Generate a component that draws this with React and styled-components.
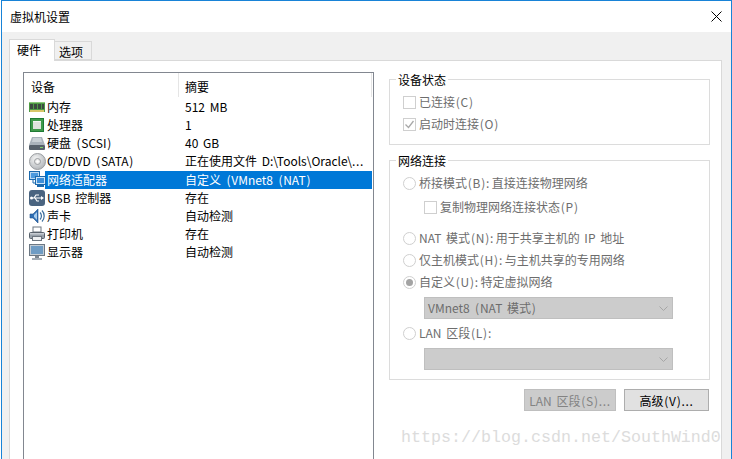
import * as React from 'react'
import styled, { createGlobalStyle } from 'styled-components'

const GlobalStyle = createGlobalStyle`
  html, body {
    margin: 0;
    padding: 0;
    height: 459px;
    overflow: hidden;
    background: #fff;
  }

  body {
    font-family: "Noto Sans CJK SC", "Noto Sans", sans-serif;
    font-size: 12px;
    word-spacing: 2px;
    color: #000;
  }
`

const RamIcon = () => (
  <svg width="16" height="16" viewBox="0 0 16 16">
    <rect x="0" y="3" width="16" height="10" fill="#4f9a45" />
    <rect x="0" y="3" width="16" height="1" fill="#8cc97c" />
    <rect x="1" y="5" width="3" height="5" fill="#3b4a40" />
    <rect x="5" y="5" width="3" height="5" fill="#3b4a40" />
    <rect x="9" y="5" width="3" height="5" fill="#3b4a40" />
    <rect x="13" y="5" width="2" height="5" fill="#3b4a40" />
    <rect x="1" y="11" width="14" height="2" fill="#d8c66a" />
  </svg>
)

const CpuIcon = () => (
  <svg width="16" height="16" viewBox="0 0 16 16">
    <rect x="1" y="1" width="14" height="14" fill="#3f9a4a" />
    <rect x="1.5" y="1.5" width="13" height="13" fill="none" stroke="#1f7a35" />
    <rect x="4" y="4" width="8" height="8" fill="#dfe4dd" />
    <rect x="4" y="4" width="8" height="1" fill="#f4f6f3" />
  </svg>
)

const DiskIcon = () => (
  <svg width="16" height="16" viewBox="0 0 16 16">
    <path d="M3 2h10l3 8H0z" fill="#a9b2bb" />
    <path d="M4 3h8l1 4H3z" fill="#c9d0d6" />
    <rect x="0" y="10" width="16" height="5" rx="1" fill="#56606b" />
    <rect x="11" y="12" width="3" height="1" fill="#7fd06a" />
  </svg>
)

const DiscIcon = () => (
  <svg width="17" height="17" viewBox="0 0 17 17">
    <defs>
      <radialGradient id="disc" cx="0.4" cy="0.35" r="0.8">
        <stop offset="0" stopColor="#f6f6f6" />
        <stop offset="0.6" stopColor="#c6c9cc" />
        <stop offset="1" stopColor="#a6a9ad" />
      </radialGradient>
    </defs>
    <circle cx="8.5" cy="8.5" r="8" fill="url(#disc)" stroke="#9a9da1" />
    <circle cx="8.5" cy="8.5" r="3" fill="#e8e8e8" stroke="#9a9da1" />
    <circle cx="8.5" cy="8.5" r="1.2" fill="#fff" />
  </svg>
)

const NetworkIcon = () => (
  <svg width="17" height="17" viewBox="0 0 17 17">
    <rect x="0.5" y="0.5" width="10" height="8" fill="#bcd9f2" stroke="#1b69ad" />
    <rect x="2" y="2" width="7" height="5" fill="#4d9ade" />
    <path d="M4 9v3h2" fill="none" stroke="#1b69ad" />
    <rect x="6.5" y="5.5" width="10" height="8" fill="#cfe6f8" stroke="#1b69ad" />
    <rect x="8" y="7" width="7" height="5" fill="#3f8fd8" />
    <rect x="8" y="14" width="7" height="2" fill="#1b69ad" />
  </svg>
)

const UsbIcon = () => (
  <svg width="16" height="16" viewBox="0 0 16 16">
    <rect x="0" y="0" width="16" height="16" rx="3" fill="#4a6480" />
    <path d="M2 8h11M5 8l2-3h3M6 8l2 3h2" fill="none" stroke="#fff" strokeWidth="1.2" />
    <path d="M12 6l3 2-3 2z" fill="#fff" />
    <circle cx="2.5" cy="8" r="1.5" fill="#fff" />
  </svg>
)

const SoundIcon = () => (
  <svg width="16" height="16" viewBox="0 0 16 16">
    <path d="M1 6h3l5-5v14l-5-5H1z" fill="#2f6fb5" stroke="#1e4f8a" strokeWidth="0.6" />
    <path d="M5 7l3-3v8l-3-3z" fill="#a9cdee" />
    <path d="M11 4.5a5 5 0 0 1 0 7M13 2.5a8 8 0 0 1 0 11" fill="none" stroke="#3c6f9f" strokeWidth="1.2" />
  </svg>
)

const PrinterIcon = () => (
  <svg width="16" height="16" viewBox="0 0 16 16">
    <rect x="4" y="1" width="8" height="5" fill="#fff" stroke="#6d7680" />
    <rect x="0.5" y="6.5" width="15" height="6" rx="1" fill="#98a1aa" stroke="#59626c" />
    <rect x="1" y="7" width="14" height="1.5" fill="#c6ccd2" />
    <rect x="3.5" y="10.5" width="9" height="4" fill="#eef0f2" stroke="#6d7680" />
  </svg>
)

const MonitorIcon = () => (
  <svg width="16" height="16" viewBox="0 0 16 16">
    <rect x="0.5" y="0.5" width="15" height="11" fill="#c3ccd4" stroke="#6c7884" />
    <rect x="2" y="2" width="12" height="8" fill="#6f9cc4" />
    <rect x="6" y="12" width="4" height="2" fill="#7c8690" />
    <rect x="3" y="14" width="10" height="2" fill="#a3acb5" />
  </svg>
)

const TickIcon = () => (
  <svg width="11" height="11" viewBox="0 0 11 11">
    <path d="M1.5 5.5l3 3 5-6.5" fill="none" stroke="#a8a8a8" strokeWidth="1.3" />
  </svg>
)

const CloseIcon = () => (
  <svg width="11" height="11" viewBox="0 0 11 11">
    <path d="M0.5 0.5l10 10M10.5 0.5l-10 10" fill="none" stroke="#000" />
  </svg>
)

const ChevronIcon = () => (
  <svg width="9" height="5" viewBox="0 0 9 5">
    <path d="M0.5 0.5l4 4 4-4" fill="none" stroke="#a6a6a6" />
  </svg>
)

const DEVICES = [
  { icon: <RamIcon />, name: '内存', summary: '512 MB' },
  { icon: <CpuIcon />, name: '处理器', summary: '1' },
  { icon: <DiskIcon />, name: '硬盘 (SCSI)', summary: '40 GB' },
  { icon: <DiscIcon />, name: 'CD/DVD (SATA)', summary: '正在使用文件 D:\\Tools\\Oracle\\...' },
  { icon: <NetworkIcon />, name: '网络适配器', summary: '自定义 (VMnet8 (NAT)', selected: true },
  { icon: <UsbIcon />, name: 'USB 控制器', summary: '存在' },
  { icon: <SoundIcon />, name: '声卡', summary: '自动检测' },
  { icon: <PrinterIcon />, name: '打印机', summary: '存在' },
  { icon: <MonitorIcon />, name: '显示器', summary: '自动检测' }
]

// the original UI font sets brackets and dots wider than Noto does
function Txt({ children }) {
  return children.split(/([()]|\.\.\.)/).map((part, i) => {
    if (part === '(' || part === ')') return <Bracket key={i}>{part}</Bracket>
    if (part === '...') return <Dots key={i}>{part}</Dots>
    return part
  })
}

function Choice({ kind = 'check', checked, indent, gap, children }) {
  return (
    <ChoiceRow $indent={indent} $gap={gap}>
      {kind === 'check' ? (
        <CheckBox>{checked && <TickIcon />}</CheckBox>
      ) : (
        <RadioDot>{checked && <RadioFill />}</RadioDot>
      )}
      <ChoiceLabel><Txt>{children}</Txt></ChoiceLabel>
    </ChoiceRow>
  )
}

export default function App() {
  return (
    <>
      <GlobalStyle />
      <Window>
        <TitleBar>
          虚拟机设置
          <CloseButton><CloseIcon /></CloseButton>
        </TitleBar>
        <Body>
          <Tabs>
            <Tab $active>硬件</Tab>
            <Tab>选项</Tab>
          </Tabs>
          <Page>
            <DeviceList>
              <ListHeader>
                <HeaderCell $width={155}>设备</HeaderCell>
                <HeaderCell $width={193}>摘要</HeaderCell>
              </ListHeader>
              {DEVICES.map((d) => (
                <DeviceRow key={d.name}>
                  <IconSlot>{d.icon}</IconSlot>
                  <NameCell $selected={d.selected}><Txt>{d.name}</Txt></NameCell>
                  <SummaryCell $selected={d.selected}><Txt>{d.summary}</Txt></SummaryCell>
                </DeviceRow>
              ))}
            </DeviceList>
            <Side>
              <Group>
                <Legend>设备状态</Legend>
                <Choice>已连接(C)</Choice>
                <Choice checked>启动时连接(O)</Choice>
              </Group>
              <Group $second>
                <Legend>网络连接</Legend>
                <Choice kind="radio">{'桥接模式(B):\u2009直接连接物理网络'}</Choice>
                <Choice indent={21} gap={2}>复制物理网络连接状态(P)</Choice>
                <Choice kind="radio" gap={9}>{'NAT 模式(N):\u2009用于共享主机的 IP 地址'}</Choice>
                <Choice kind="radio">{'仅主机模式(H):\u2009与主机共享的专用网络'}</Choice>
                <Choice kind="radio" checked>{'自定义(U):\u2009特定虚拟网络'}</Choice>
                <Select>
                  <SelectText><Txt>VMnet8 (NAT 模式)</Txt></SelectText>
                  <ChevronIcon />
                </Select>
                <Choice kind="radio" gap={3}>LAN 区段(L):</Choice>
                <Select>
                  <SelectText />
                  <ChevronIcon />
                </Select>
              </Group>
              <Buttons>
                <Button $disabled><Txt>LAN 区段(S)...</Txt></Button>
                <Button $wide><Txt>高级(V)...</Txt></Button>
              </Buttons>
            </Side>
          </Page>
        </Body>
        <Watermark>https://blog.csdn.net/SouthWind0</Watermark>
      </Window>
    </>
  )
}

const Bracket = styled.span`
  padding: 0 0.75px;
`

const Dots = styled.span`
  letter-spacing: 0.67px;
`

const Window = styled.div`
  position: relative;
  box-sizing: border-box;
  display: flex;
  flex-direction: column;
  width: 731px;
  height: 480px;
  margin-left: 1px;
  border: 1px solid #1883d7;
  border-bottom: 0;
  background: #f0f0f0;
`

const TitleBar = styled.div`
  display: flex;
  align-items: center;
  justify-content: space-between;
  height: 31px;
  padding: 0 9px 0 8px;
  background: #fff;
  line-height: 32px;
`

const CloseButton = styled.span`
  display: flex;
`

const Body = styled.div`
  display: flex;
  flex: 1;
  flex-direction: column;
  padding: 7px 9px 0 7px;
`

const Tabs = styled.div`
  display: flex;
  align-items: flex-end;
  height: 21px;
`

const Tab = styled.div`
  box-sizing: border-box;
  position: relative;
  z-index: ${({ $active }) => ($active ? 1 : 0)};
  display: flex;
  align-items: center;
  justify-content: center;
  height: ${({ $active }) => ($active ? '22px' : '19px')};
  width: ${({ $active }) => ($active ? '46px' : '38px')};
  margin-bottom: ${({ $active }) => ($active ? '-1px' : '0')};
  margin-left: ${({ $active }) => ($active ? '0' : '-1px')};
  padding-right: ${({ $active }) => ($active ? '6px' : '4px')};
  padding-top: ${({ $active }) => ($active ? '0' : '2px')};
  padding-bottom: ${({ $active }) => ($active ? '2px' : '0')};
  border: 1px solid #d9d9d9;
  border-bottom: ${({ $active }) => ($active ? '0' : '1px solid #d9d9d9')};
  background: ${({ $active }) => ($active ? '#fff' : '#f0f0f0')};
`

const Page = styled.div`
  display: flex;
  flex: 1;
  gap: 15px;
  padding: 11px 11px 0 13px;
  border: 1px solid #d9d9d9;
  background: #fff;
`

const DeviceList = styled.div`
  box-sizing: border-box;
  width: 351px;
  padding-right: 1px;
  border: 1px solid #828790;
  background: #fff;
`

const ListHeader = styled.div`
  display: flex;
  height: 25px;
`

const HeaderCell = styled.div`
  box-sizing: border-box;
  width: ${({ $width }) => $width}px;
  height: 24px;
  line-height: 28px;
  padding-left: ${({ $width }) => ($width === 155 ? 7 : 6)}px;
  border-right: 1px solid #e5e5e5;
`

const DeviceRow = styled.div`
  display: flex;
  align-items: stretch;
  height: 18.125px;
  padding-left: 5px;
`

const IconSlot = styled.div`
  position: relative;
  z-index: 1;
  display: flex;
  align-items: center;
  flex: none;
  width: 16px;

  svg {
    flex: none;
  }
`

const NameCell = styled.div`
  box-sizing: border-box;
  flex: none;
  width: 133px;
  padding-left: 2px;
  line-height: 18px;
  white-space: nowrap;
  background: ${({ $selected }) => ($selected ? '#0078d7' : 'transparent')};
  color: ${({ $selected }) => ($selected ? '#fff' : '#000')};
`

const SummaryCell = styled.div`
  flex: 1;
  padding-left: 7px;
  line-height: 18px;
  white-space: nowrap;
  background: ${({ $selected }) => ($selected ? '#0078d7' : 'transparent')};
  color: ${({ $selected }) => ($selected ? '#fff' : '#000')};
`

const Side = styled.div`
  display: flex;
  flex-direction: column;
  width: 321px;
`

const Group = styled.fieldset`
  box-sizing: border-box;
  min-width: 0;
  margin: ${({ $second }) => ($second ? '8px 0 0' : '0')};
  padding: 5px 13px 9px;
  border: 1px solid #dcdcdc;
`

const Legend = styled.legend`
  height: 14px;
  margin-left: -7px;
  padding: 0 2px;
  line-height: 16px;
`

const ChoiceRow = styled.div`
  display: flex;
  align-items: center;
  gap: 3px;
  height: 22px;
  margin-top: ${({ $gap = 0 }) => $gap}px;
  margin-left: ${({ $indent = 0 }) => $indent}px;
  color: #6d6d6d;
  white-space: nowrap;
`

const ChoiceLabel = styled.span`
  margin-bottom: 2px;
`

const CheckBox = styled.span`
  box-sizing: border-box;
  display: flex;
  align-items: center;
  justify-content: center;
  width: 13px;
  height: 13px;
  border: 1px solid #cfcfcf;
  background: #fff;
`

const RadioDot = styled(CheckBox)`
  border-radius: 50%;
`

const RadioFill = styled.span`
  width: 7px;
  height: 7px;
  border-radius: 50%;
  background: #a3a3a3;
`

const Select = styled.div`
  box-sizing: border-box;
  display: flex;
  align-items: center;
  justify-content: space-between;
  width: 249px;
  height: 22px;
  margin: 4px 0 0 21px;
  padding: 0 4px 0 3px;
  border: 1px solid #bfbfbf;
  background: #cccccc;
  color: #6d6d6d;
`

const SelectText = styled.span`
  margin-bottom: 2px;
`

const Buttons = styled.div`
  display: flex;
  justify-content: flex-end;
  gap: 8px;
  margin-top: 9px;
  padding-right: 1px;
`

const Button = styled.div`
  box-sizing: border-box;
  display: flex;
  align-items: center;
  justify-content: center;
  width: ${({ $wide }) => ($wide ? '85px' : '92px')};
  height: 22px;
  border: 1px solid ${({ $disabled }) => ($disabled ? '#bfbfbf' : '#adadad')};
  background: ${({ $disabled }) => ($disabled ? '#cccccc' : '#e1e1e1')};
  color: ${({ $disabled }) => ($disabled ? '#838383' : '#000')};
`

const Watermark = styled.div`
  position: absolute;
  left: 399px;
  top: 427px;
  font-family: "Liberation Mono", monospace;
  font-size: 16.67px;
  line-height: 20px;
  word-spacing: 0;
  color: #dcdcdc;
  white-space: nowrap;
`
